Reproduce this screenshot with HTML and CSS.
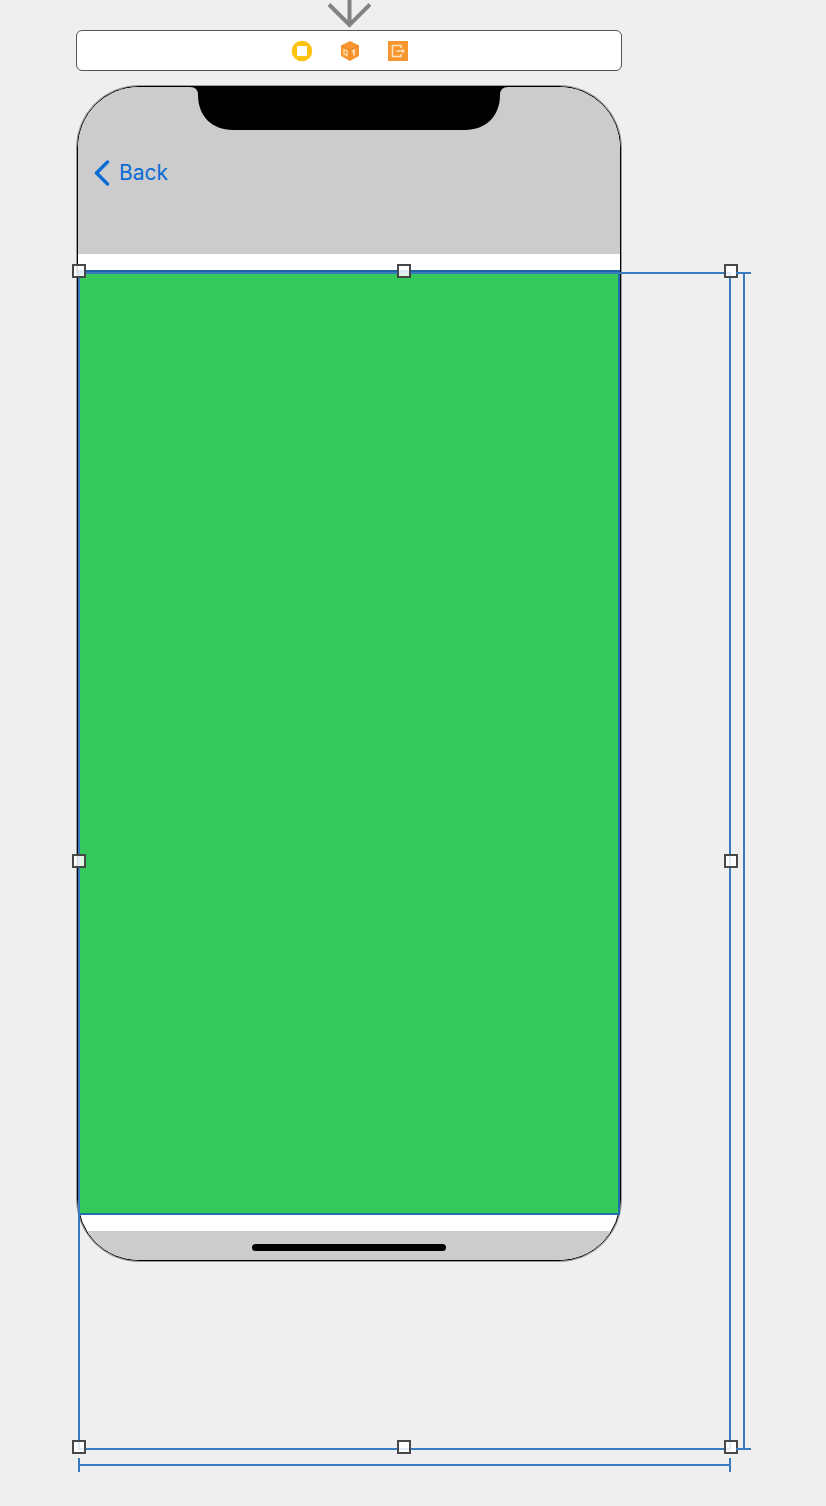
FILE: index.html
```html
<!DOCTYPE html>
<html lang="en">
<head>
<meta charset="utf-8">
<meta name="viewport" content="width=device-width, initial-scale=1">
<title>Storyboard</title>
<link rel="stylesheet" href="styles.css">
</head>
<body>
<main class="canvas">
  <svg class="entry-arrow" width="44" height="30" viewBox="0 0 44 30" aria-hidden="true">
    <path d="M22.500 0V25M2 4.500L22.500 25L43 4.500" fill="none" stroke="#828282" stroke-width="4"/>
  </svg>

  <div class="dock">
    <button class="dock-item" type="button" aria-label="View Controller">
      <svg width="22" height="22" viewBox="0 0 22 22">
        <circle cx="11" cy="11" r="10.300" fill="#ffc20e"/>
        <rect x="6" y="6" width="10" height="10" rx="1" fill="#fff"/>
      </svg>
    </button>
    <button class="dock-item" type="button" aria-label="First Responder">
      <svg width="22" height="22" viewBox="0 0 22 22">
        <path d="M11 1L20 5.500V16L11 21L2 16V5.500Z" fill="#f7962f"/>
        <path d="M2 5.500L11 10L20 5.500M11 10V21" fill="none" stroke="#ee8424" stroke-width="1"/>
        <path d="M5 9.500L8 11V15.500L5 14Z" fill="none" stroke="#ffdcb0" stroke-width="1.300"/>
        <path d="M13 11.500L15 10.300V15.500" fill="none" stroke="#ffe2bd" stroke-width="1.700"/>
      </svg>
    </button>
    <button class="dock-item" type="button" aria-label="Exit">
      <svg width="22" height="22" viewBox="0 0 22 22">
        <rect x="1" y="1" width="20" height="20" fill="#f7962f"/>
        <path d="M14 8V5.500H5.500V16.500H14V14M9.500 11H16" fill="none" stroke="#ffe2bd" stroke-width="1.600"/>
        <path d="M15 8.500L18 11L15 13.500Z" fill="#ffe2bd"/>
      </svg>
    </button>
  </div>

  <div class="scene">
    <section class="phone">
      <header class="nav-area">
        <svg class="notch" width="318" height="43" viewBox="0 0 318 43" aria-hidden="true">
          <path d="M0 0Q8 0 8 8C8 29 22 43 43 43H275C296 43 310 29 310 8Q310 0 318 0Z" fill="#000"/>
        </svg>
        <button class="back" type="button">
          <svg width="16" height="26" viewBox="0 0 16 26" aria-hidden="true">
            <path d="M13.500 2L2.500 13L13.500 24" fill="none" stroke="#0b6bd6" stroke-width="3.400" stroke-linecap="round" stroke-linejoin="round"/>
          </svg>
          Back
        </button>
      </header>
      <div class="content-view"></div>
      <footer class="home-area"><span class="home-indicator"></span></footer>
    </section>

    <div class="view-edge"></div>
    <div class="selection">
      <span class="handle top left"></span>
      <span class="handle top middle"></span>
      <span class="handle top right"></span>
      <span class="handle center left"></span>
      <span class="handle center right"></span>
      <span class="handle bottom left"></span>
      <span class="handle bottom middle"></span>
      <span class="handle bottom right"></span>
      <span class="measure-height"></span>
      <span class="measure-width"></span>
    </div>
  </div>
</main>
</body>
</html>
```
FILE: styles.css
```css
* {
  box-sizing: border-box;
}

body {
  margin: 0;
  background: #efefef;
  font-family: Inter, "Liberation Sans", sans-serif;
}

button {
  padding: 0;
  border: 0;
  background: none;
  font: inherit;
}

svg {
  display: block;
}

.canvas {
  display: flex;
  flex-direction: column;
  min-height: 100vh;
  padding: 0 204px 245px 76px;
}

.entry-arrow {
  align-self: center;
}

.dock {
  display: flex;
  align-items: center;
  justify-content: center;
  gap: 26px;
  height: 41px;
  margin-bottom: 15px;
  padding-left: 2px;
  border: 1px solid #555;
  border-radius: 6px;
  background: #fff;
}

.scene {
  position: relative;
  margin: 0 1px;
}

.phone {
  overflow: hidden;
  border: 1px solid #000;
  border-radius: 62px;
  background: #fff;
  box-shadow: 0 0 0 1px rgb(0 0 0 / 35%);
}

.nav-area {
  height: 167px;
  background: #ccc;
}

.notch {
  margin: 0 auto;
}

.back {
  display: flex;
  align-items: center;
  gap: 9px;
  margin: 30px 0 0 16px;
  color: #0b6bd6;
  font-size: 21px;
  line-height: 26px;
}

.content-view {
  height: 943px;
  margin: 17px 0;
  background: #35c85a;
}

.home-area {
  display: flex;
  justify-content: center;
  height: 29px;
  padding-top: 13px;
  background: #ccc;
}

.home-indicator {
  width: 194px;
  height: 7px;
  border-radius: 4px;
  background: #000;
}

/* Outline of the part of the selected view that lies inside the phone */
.view-edge {
  position: absolute;
  top: 184px;
  right: 1px;
  bottom: 46px;
  left: 1px;
  border: 2px solid #1f70a8;
  border-top: 3px solid #1a63a5;
}

.selection {
  position: absolute;
  top: 186px;
  left: 1px;
  width: 120%;
  height: 1178px;
  border: 2px solid #3a7bbd;
}

.handle {
  position: absolute;
  width: 14px;
  height: 14px;
  border: 2px solid #484848;
  background: rgb(255 255 255 / 85%);
}

.top {
  top: -10px;
}

.center {
  top: calc(50% - 7px);
}

.bottom {
  bottom: -6px;
}

.left {
  left: -8px;
}

.middle {
  left: calc(50% - 7px);
}

.right {
  right: -9px;
}

.measure-height {
  position: absolute;
  top: -2px;
  bottom: -2px;
  left: calc(100% + 7px);
  width: 15px;
  border: solid #3a7bbd;
  border-width: 2px 0;
}

.measure-height::before {
  content: "";
  position: absolute;
  top: 0;
  bottom: 0;
  left: 7px;
  width: 2px;
  background: #3a7bbd;
}

.measure-width {
  position: absolute;
  top: calc(100% + 10px);
  right: -2px;
  left: -2px;
  height: 14px;
  border: solid #3a7bbd;
  border-width: 0 2px;
}

.measure-width::before {
  content: "";
  position: absolute;
  top: 6px;
  right: 0;
  left: 0;
  height: 2px;
  background: #3a7bbd;
}
```
